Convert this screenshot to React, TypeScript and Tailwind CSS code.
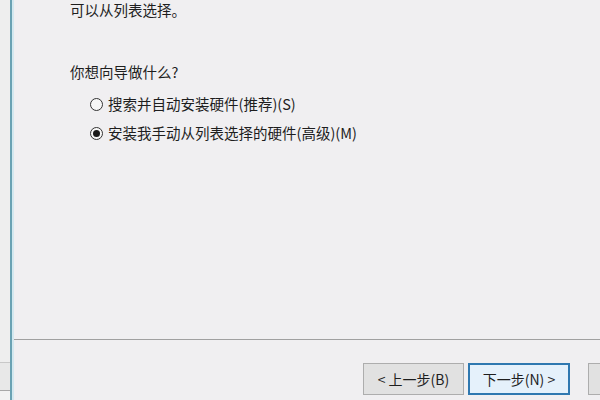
import React from "react";

function Radio({ checked }: { checked?: boolean }) {
  return (
    <span className="w-[13px] h-[13px] rounded-full border border-[#333] bg-[#f7f7f7] flex items-center justify-center shrink-0">
      {checked ? <span className="w-[7px] h-[7px] rounded-full bg-[#1a1a1a]" /> : null}
    </span>
  );
}

export default function App() {
  const font = { fontFamily: '"Noto Sans CJK SC", "Microsoft YaHei", sans-serif' };
  return (
    <div className="w-[600px] h-[400px] flex overflow-hidden bg-[#f0eff1] text-[#1e1e1e]" style={font}>
      {/* left strip (window behind) */}
      <div className="w-[10px] shrink-0 h-full bg-[#eeeeee] flex flex-col">
        <div className="h-[362px]" />
        <div className="h-px bg-[#c8c8c8]" />
        <div className="h-[27px] bg-[#e8e8e8]" />
        <div className="h-px bg-[#a8a8a8]" />
        <div className="flex-1 bg-[#f2f2f2]" />
      </div>
      {/* window border */}
      <div className="w-[2px] shrink-0 h-full bg-[#6aa2b3]" />
      <div className="w-[2px] shrink-0 h-full bg-[#d3e8ef]" />
      {/* main */}
      <div className="flex-1 min-w-0 flex flex-col">
        <div className="h-[339px] flex flex-col pl-[56px]">
          <div className="text-[14.5px] leading-[18px] pt-px">可以从列表选择。</div>
          <div className="text-[14.5px] leading-[20px] mt-[43px]">你想向导做什么?</div>
          <div className="flex items-center gap-[5px] pl-[20px] mt-[12px] text-[14.5px] leading-[20px]">
            <Radio />
            <span>搜索并自动安装硬件(推荐)(S)</span>
          </div>
          <div className="flex items-center gap-[5px] pl-[20px] mt-[9px] text-[14.5px] leading-[20px]">
            <Radio checked />
            <span>安装我手动从列表选择的硬件(高级)(M)</span>
          </div>
        </div>
        <div className="h-px bg-[#a0a0a0]" />
        <div className="flex-1 flex items-start pt-[23px] pl-[349px] gap-[4px]">
          <div className="w-[101px] h-[32px] shrink-0 bg-[#e1e1e1] border border-[#adadad] flex items-center justify-center text-[14px]">
            &lt; 上一步(B)
          </div>
          <div className="w-[102px] h-[32px] shrink-0 bg-[#e5f1fb] border-2 border-[#2f78b0] flex items-center justify-center text-[14px]">
            下一步(N) &gt;
          </div>
          <div className="w-[60px] h-[32px] shrink-0 ml-[14px] bg-[#e1e1e1] border border-[#adadad]" />
        </div>
      </div>
    </div>
  );
}
